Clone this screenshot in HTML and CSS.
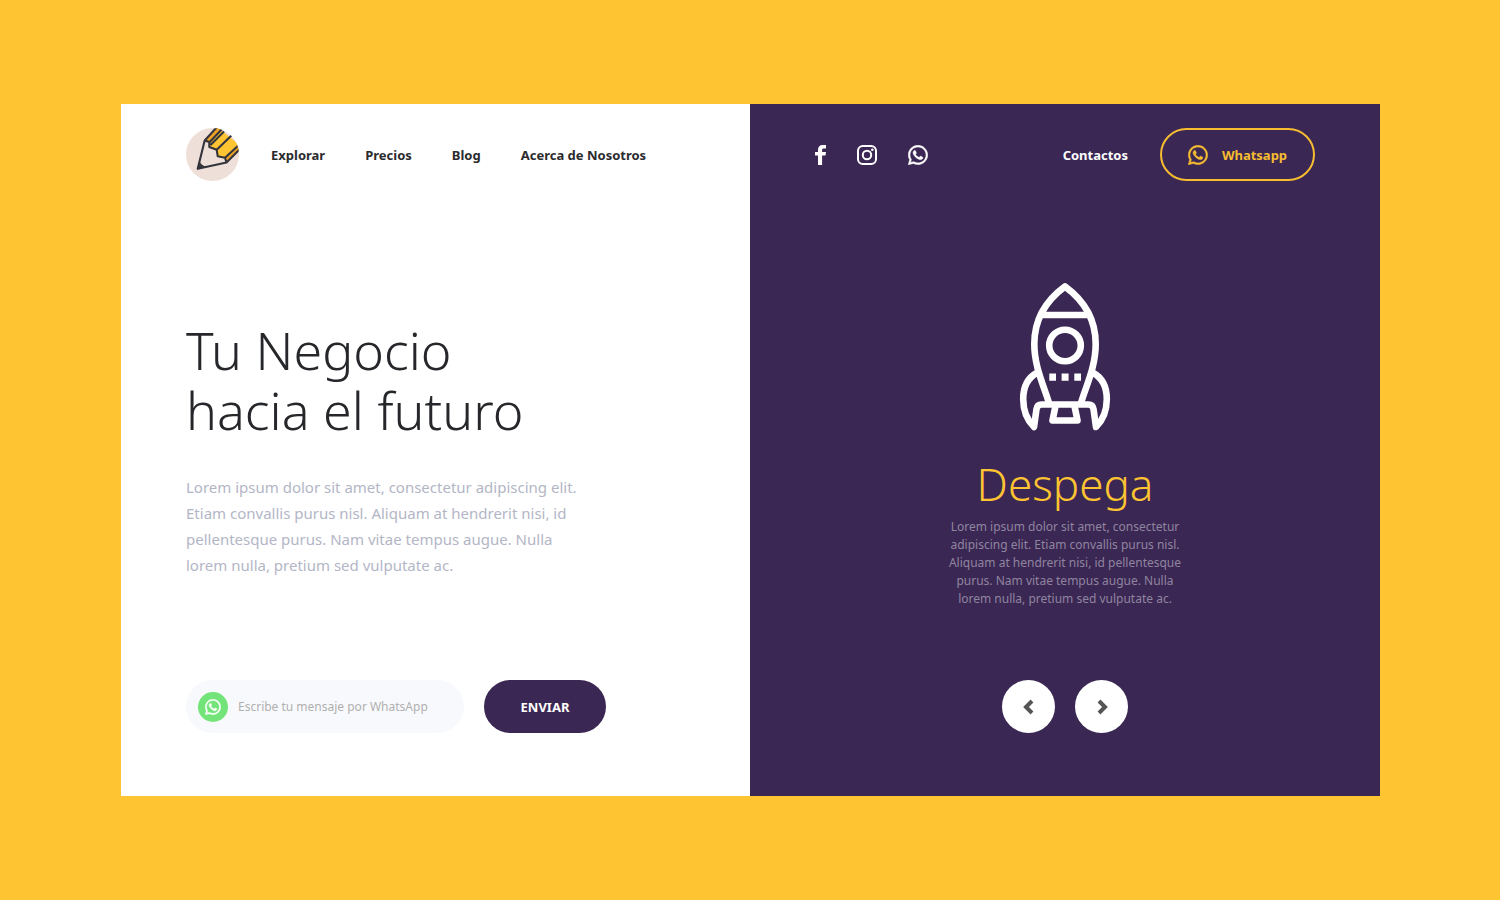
FILE: index.html
```html
<!DOCTYPE html>
<html lang="es">
<head>
<meta charset="utf-8">
<meta name="viewport" content="width=device-width, initial-scale=1">
<title>Tu Negocio hacia el futuro</title>
<link rel="stylesheet" href="styles.css">
</head>
<body>
<svg class="defs" aria-hidden="true">
  <symbol id="whatsapp" viewBox="-6 24 462 462">
    <path fill="currentColor" stroke="currentColor" stroke-width="12" d="M380.9 97.1C339 55.1 283.2 32 223.9 32c-122.4 0-222 99.6-222 222 0 39.1 10.2 77.3 29.6 111L0 480l117.7-30.9c32.4 17.7 68.9 27 106.1 27h.1c122.3 0 224.1-99.6 224.1-222 0-59.3-25.2-115-67.1-157zm-157 341.6c-33.2 0-65.7-8.9-94-25.7l-6.7-4-69.8 18.3L72 359.2l-4.4-7c-18.5-29.4-28.2-63.3-28.2-98.2 0-101.7 82.8-184.5 184.6-184.5 49.3 0 95.6 19.2 130.4 54.1 34.8 34.9 56.2 81.2 56.1 130.5 0 101.8-84.9 184.6-186.6 184.6zm101.2-138.2c-5.5-2.8-32.8-16.2-37.9-18-5.1-1.9-8.8-2.8-12.5 2.8-3.7 5.6-14.3 18-17.6 21.8-3.2 3.7-6.5 4.2-12 1.4-32.6-16.3-54-29.1-75.5-66-5.7-9.8 5.7-9.1 16.3-30.3 1.8-3.7.9-6.9-.5-9.7-1.4-2.8-12.5-30.1-17.1-41.2-4.5-10.8-9.1-9.3-12.5-9.5-3.2-.2-6.9-.2-10.6-.2-3.7 0-9.7 1.4-14.8 6.9-5.1 5.6-19.4 19-19.4 46.3 0 27.3 19.9 53.7 22.6 57.4 2.8 3.7 39.1 59.7 94.8 83.8 35.2 15.2 49 16.5 66.6 13.9 10.7-1.6 32.8-13.4 37.4-26.4 4.6-13 4.6-24.1 3.2-26.4-1.3-2.5-5-3.9-10.5-6.6z"/>
  </symbol>
</svg>
<main class="card">
  <section class="panel panel-light">
    <header class="bar">
      <a class="logo" href="#" aria-label="Inicio">
        <svg viewBox="0 0 53 53" width="53" height="53" aria-hidden="true">
          <clipPath id="disc"><circle cx="26.5" cy="26.5" r="26.5"/></clipPath>
          <g clip-path="url(#disc)">
            <rect width="53" height="53" fill="#eee0d9"/>
            <path fill="#ffc431" d="M18.7 12.5 31-1 56 19 40.5 34.5 39 29.7 31.7 28.3 30.7 21.7 23.3 19V14z"/>
            <path fill="#eca026" d="M18.7 12.5 31-1 37 0 23.3 15zM39.5 31 56 13V20L40.5 34.5z"/>
            <g fill="none" stroke="#34343c" stroke-width="2.1" stroke-linejoin="round">
              <path d="M31-1 18.7 12.5 11.7 40.7 40.5 34.5 56 19"/>
              <path d="M18.7 12.5 23.3 14V19L30.7 21.7 31.7 28.3 39 29.7 40.5 34.5M23.3 14.5 37 0M24.500 17 38 3.500M30.7 21.7 46 7M39 29.7 54 16"/>
            </g>
            <path fill="#34343c" d="M13.700 33.500C14.500 36 17 38 20.500 38.700L11.200 41.700z"/>
          </g>
        </svg>
      </a>
      <nav class="nav" aria-label="Principal">
        <a href="#">Explorar</a>
        <a href="#">Precios</a>
        <a href="#">Blog</a>
        <a href="#">Acerca de Nosotros</a>
      </nav>
    </header>
    <div class="intro">
      <h1>Tu Negocio<br>hacia el futuro</h1>
      <p>Lorem ipsum dolor sit amet, consectetur adipiscing elit.<br>Etiam convallis purus nisl. Aliquam at hendrerit nisi, id<br>pellentesque purus. Nam vitae tempus augue. Nulla<br>lorem nulla, pretium sed vulputate ac.</p>
    </div>
    <form class="message">
      <label class="field">
        <span class="badge"><svg width="16" height="16" aria-hidden="true"><use href="#whatsapp"/></svg></span>
        <input type="text" placeholder="Escribe tu mensaje por WhatsApp" aria-label="Escribe tu mensaje por WhatsApp">
      </label>
      <button class="send" type="button">ENVIAR</button>
    </form>
  </section>

  <section class="panel panel-dark">
    <header class="bar bar-split">
      <nav class="social" aria-label="Redes sociales">
        <a href="#" aria-label="Facebook"><svg width="11" height="20" viewBox="0 0 11 20" aria-hidden="true"><path fill="currentColor" d="M3 20V10.500H0V7h3V4.700C3 1.700 4.800 0 7.600 0H11v3.400H8.700C7.500 3.400 7.100 4 7.100 5v2H11l-.5 3.500H7.100V20z"/></svg></a>
        <a href="#" aria-label="Instagram"><svg width="20" height="20" viewBox="0 0 20 20" aria-hidden="true"><g fill="none" stroke="currentColor" stroke-width="2"><rect x="1" y="1" width="18" height="18" rx="4.800"/><circle cx="10" cy="10" r="4.200"/></g><circle cx="15.300" cy="4.700" r="1.300" fill="currentColor"/></svg></a>
        <a href="#" aria-label="WhatsApp"><svg width="20" height="20" aria-hidden="true"><use href="#whatsapp"/></svg></a>
      </nav>
      <div class="contact">
        <a class="contact-link" href="#">Contactos</a>
        <a class="outline" href="#"><svg width="20" height="20" aria-hidden="true"><use href="#whatsapp"/></svg>Whatsapp</a>
      </div>
    </header>
    <article class="slide">
      <svg width="92" height="150" viewBox="0 0 92 150" aria-hidden="true">
        <g fill="none" stroke="#fff" stroke-width="6.600" stroke-linecap="round" stroke-linejoin="round">
          <path d="M30 121C25 104 15.300 85 15.300 62 15.300 36 29 17 46 4.500 63 17 76.700 36 76.700 62 76.700 85 67 104 62 121"/>
          <path d="M25 33H67"/>
          <circle cx="46" cy="63.500" r="15.800"/>
          <path d="M18.500 90.500C10 95 4.200 104 4.200 117 4.200 129 9 139 15 145L17.500 127C18 124 19.500 122.500 22.500 122.500H69.500C72.500 122.500 74 124 74.500 127L77 145C83 139 87.800 129 87.800 117 87.800 104 82 95 73.500 90.500"/>
          <path d="M36.500 124 33.500 138.500H58.500L55.500 124"/>
        </g>
        <path fill="#fff" d="M30.300 91.500h6.700v7.200h-6.700zM42.600 91.500h7v7.200h-7zM55.300 91.500h6.700v7.200h-6.700z"/>
      </svg>
      <h2>Despega</h2>
      <p>Lorem ipsum dolor sit amet, consectetur<br>adipiscing elit. Etiam convallis purus nisl.<br>Aliquam at hendrerit nisi, id pellentesque<br>purus. Nam vitae tempus augue. Nulla<br>lorem nulla, pretium sed vulputate ac.</p>
    </article>
    <div class="pager">
      <button type="button" aria-label="Anterior"><svg width="12" height="16" viewBox="0 0 12 16" aria-hidden="true"><path d="M9 2 3 8l6 6"/></svg></button>
      <button type="button" aria-label="Siguiente"><svg width="12" height="16" viewBox="0 0 12 16" aria-hidden="true"><path d="M3 2l6 6-6 6"/></svg></button>
    </div>
  </section>
</main>
</body>
</html>
```
FILE: styles.css
```css
* {
  box-sizing: border-box;
}

body {
  display: flex;
  min-height: 100vh;
  margin: 0;
  padding: 104px 120px 104px 121px;
  background: #ffc431;
  font-family: "Noto Sans", "Open Sans", sans-serif;
}

h1,
h2,
p {
  margin: 0;
}

a {
  color: inherit;
  text-decoration: none;
}

button,
input {
  font-family: inherit;
  border: 0;
}

svg {
  display: block;
  flex: none;
}

.defs {
  position: absolute;
  width: 0;
  height: 0;
}

.card {
  display: grid;
  flex: 1;
  grid-template-columns: 629fr 630fr;
}

.panel {
  display: flex;
  flex-direction: column;
  padding: 24px 65px 63px;
}

.panel-light {
  background: #fff;
}

.panel-dark {
  color: #fff;
  background: #3b2753;
}

.bar {
  display: flex;
  align-items: center;
  gap: 32px;
  min-height: 53px;
  font-size: 13px;
  font-weight: 700;
  white-space: nowrap;
}

.bar-split {
  justify-content: space-between;
}

.nav {
  display: flex;
  gap: 40px;
  color: #2b2b2e;
}

.intro {
  margin-top: 139px;
}

.intro h1 {
  color: #26272a;
  font-size: 52px;
  font-weight: 300;
  line-height: 60px;
}

.intro p {
  margin-top: 34px;
  color: #b3b6c6;
  font-size: 15px;
  line-height: 26px;
}

.message {
  display: flex;
  gap: 20px;
  margin-top: auto;
}

.field {
  display: flex;
  align-items: center;
  gap: 10px;
  width: 278px;
  height: 53px;
  padding: 0 12px;
  border-radius: 27px;
  background: #f8f9fc;
}

.badge {
  display: grid;
  flex: none;
  place-items: center;
  width: 30px;
  height: 30px;
  border-radius: 50%;
  color: #fff;
  background: #73e479;
}

.field input {
  flex: 1;
  min-width: 0;
  padding: 0;
  background: transparent;
  font-size: 12px;
  outline: 0;
}

.field input::placeholder {
  color: #b0b0b0;
  opacity: 1;
}

.send {
  width: 122px;
  height: 53px;
  border-radius: 27px;
  color: #fff;
  background: #3b2753;
  font-size: 13px;
  font-weight: 700;
}

.social {
  display: flex;
  align-items: center;
  gap: 31px;
}

.contact {
  display: flex;
  align-items: center;
  gap: 32px;
}

.outline {
  display: flex;
  align-items: center;
  justify-content: center;
  gap: 14px;
  width: 155px;
  height: 53px;
  border: 2px solid #f6bd31;
  border-radius: 27px;
  color: #f6bd31;
}

.slide {
  display: flex;
  flex-direction: column;
  align-items: center;
  margin-top: 101px;
  text-align: center;
}

.slide h2 {
  margin-top: 22px;
  color: #ffc431;
  font-size: 44px;
  font-weight: 300;
  line-height: 60px;
}

.slide p {
  margin-top: 4px;
  color: #8f85a0;
  font-size: 12px;
  line-height: 18px;
}

.pager {
  display: flex;
  justify-content: center;
  gap: 20px;
  margin-top: auto;
}

.pager button {
  display: grid;
  place-items: center;
  width: 53px;
  height: 53px;
  padding: 0;
  border-radius: 50%;
  background: #fff;
}

.pager path {
  fill: none;
  stroke: #555;
  stroke-width: 4;
}
```
